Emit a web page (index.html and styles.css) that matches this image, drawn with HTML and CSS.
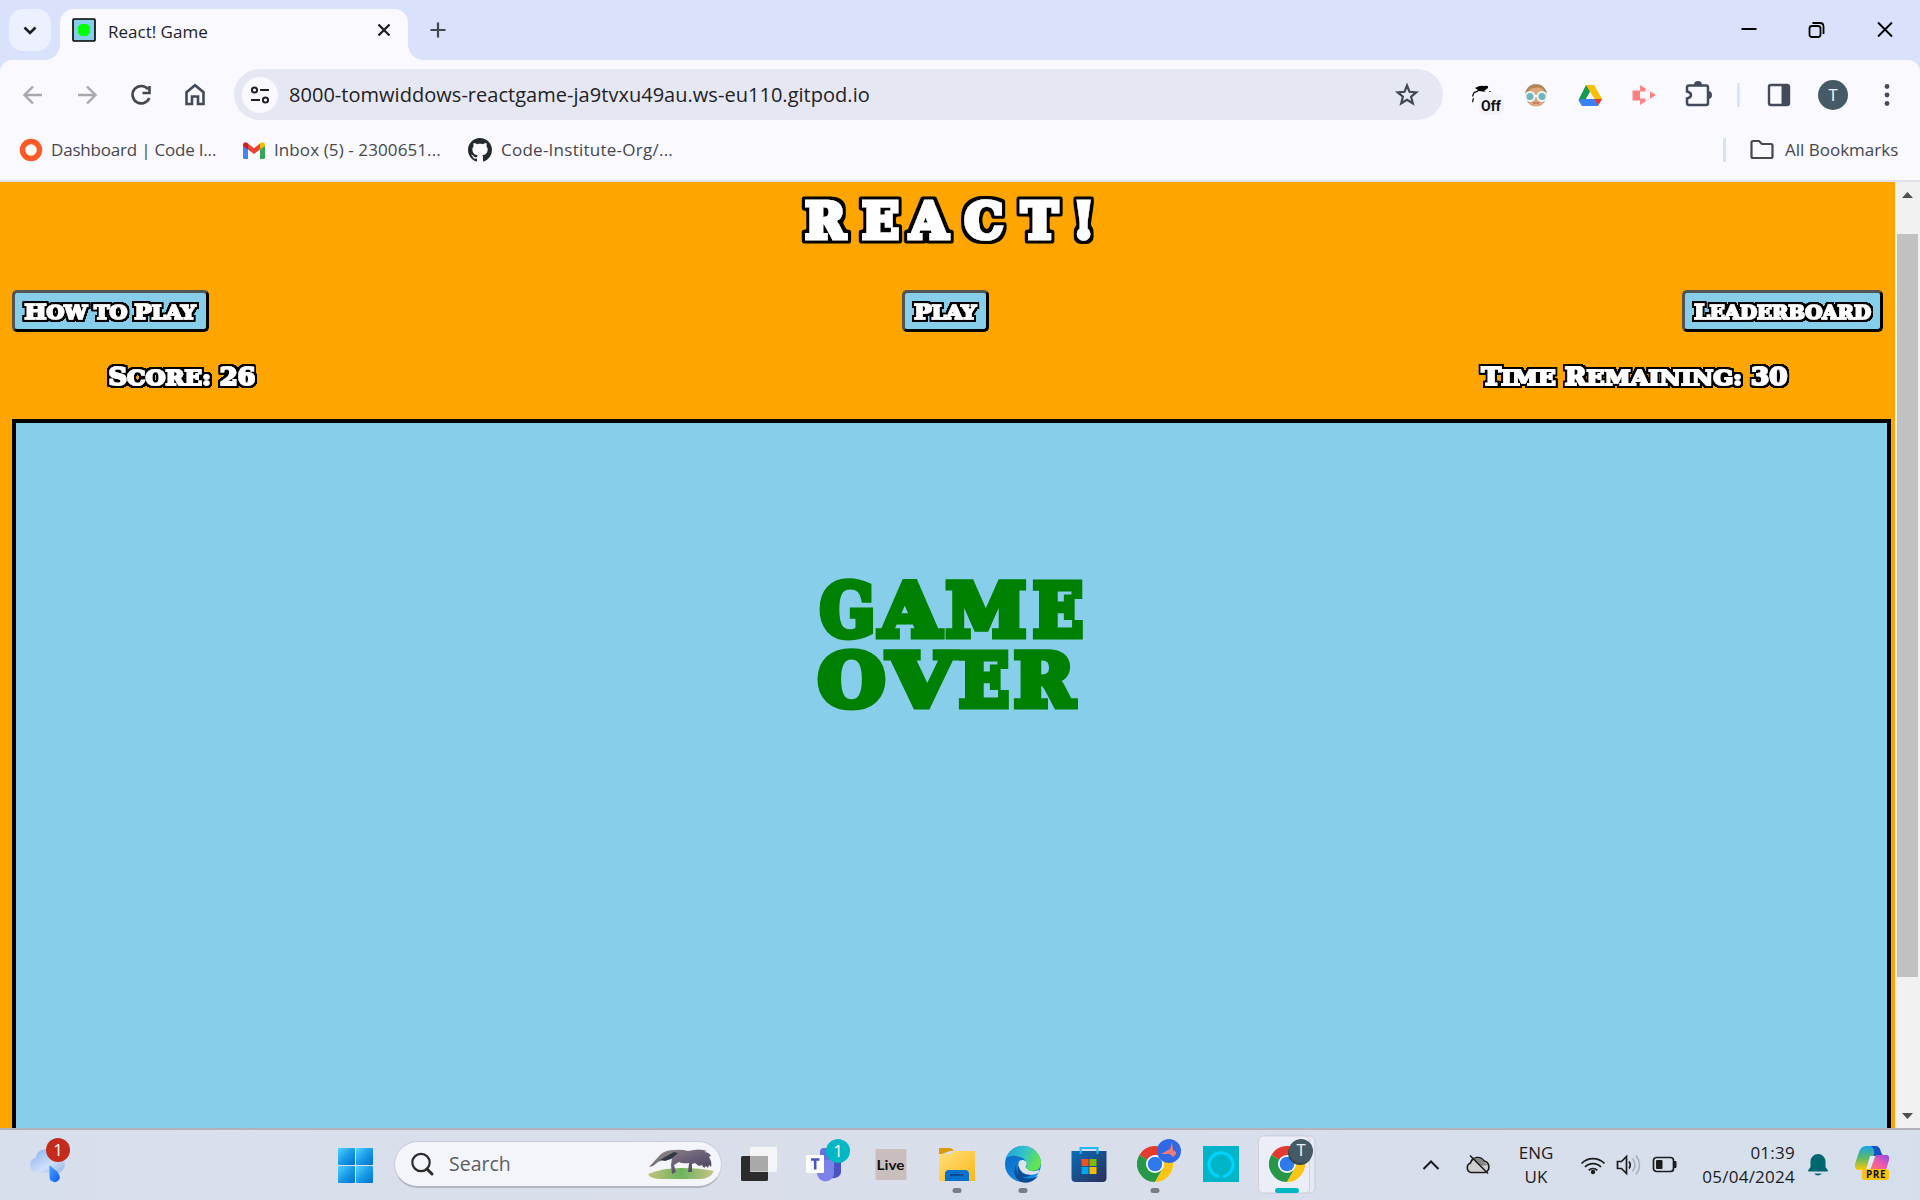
FILE: index.html
```html
<!DOCTYPE html>
<html lang="en">
<head>
<meta charset="utf-8">
<title>React! Game</title>
<link rel="stylesheet" href="styles.css">
</head>
<body>
<svg class="defs" width="0" height="0" aria-hidden="true">
  <defs>
    <filter id="outline-lg" x="-5%" y="-20%" width="110%" height="140%">
      <feMorphology in="SourceAlpha" operator="dilate" radius="3" result="fat"/>
      <feGaussianBlur in="fat" stdDeviation="0.9" result="soft"/>
      <feComponentTransfer in="soft" result="edge"><feFuncA type="linear" slope="3" intercept="-0.8"/></feComponentTransfer>
      <feMerge><feMergeNode in="edge"/><feMergeNode in="SourceGraphic"/></feMerge>
    </filter>
    <filter id="outline-sm" x="-5%" y="-20%" width="110%" height="140%">
      <feMorphology in="SourceAlpha" operator="dilate" radius="2" result="fat"/>
      <feGaussianBlur in="fat" stdDeviation="0.6" result="soft"/>
      <feComponentTransfer in="soft" result="edge"><feFuncA type="linear" slope="3" intercept="-0.5"/></feComponentTransfer>
      <feMerge><feMergeNode in="edge"/><feMergeNode in="SourceGraphic"/></feMerge>
    </filter>
    <linearGradient id="win" x1="0" y1="0" x2="1" y2="1"><stop offset="0" stop-color="#4fd4ff"/><stop offset=".5" stop-color="#1a9be6"/><stop offset="1" stop-color="#0070cc"/></linearGradient>
    <linearGradient id="fold" x1="0" y1="0" x2="1" y2="1"><stop offset="0" stop-color="#ffe07a"/><stop offset="1" stop-color="#fbb81c"/></linearGradient>
    <linearGradient id="cloud" x1="0" y1="0" x2="1" y2="1"><stop offset="0" stop-color="#86aef0"/><stop offset=".6" stop-color="#cfe0f8"/><stop offset="1" stop-color="#8fb2ea"/></linearGradient>
    <linearGradient id="drop" x1="0" y1="0" x2="1" y2="1"><stop offset="0" stop-color="#4aa3ff"/><stop offset="1" stop-color="#0a5cf5"/></linearGradient>
    <linearGradient id="edge-top" x1="0" y1="0" x2="1" y2=".4"><stop offset="0" stop-color="#1e9fe0"/><stop offset=".55" stop-color="#35c4c8"/><stop offset="1" stop-color="#62e44d"/></linearGradient>
    <linearGradient id="edge-body" x1="0" y1="0" x2=".6" y2="1"><stop offset="0" stop-color="#0a63bd"/><stop offset="1" stop-color="#138fe6"/></linearGradient>
    <linearGradient id="store" x1="0" y1="0" x2="1" y2="1"><stop offset="0" stop-color="#0a6cb8"/><stop offset="1" stop-color="#2b2f59"/></linearGradient>
    <linearGradient id="cop-a" x1="0" y1="0" x2="0" y2="1"><stop offset="0" stop-color="#18a5e8"/><stop offset=".5" stop-color="#5cb96a"/><stop offset="1" stop-color="#ffc800"/></linearGradient>
    <linearGradient id="cop-b" x1="0" y1="1" x2="1" y2="0"><stop offset="0" stop-color="#ff7a5a"/><stop offset=".5" stop-color="#ef5aa8"/><stop offset="1" stop-color="#8a48e8"/></linearGradient>
    <linearGradient id="fur" x1="0" y1="0" x2="1" y2="1"><stop offset="0" stop-color="#9a9085"/><stop offset=".5" stop-color="#6b6178"/><stop offset="1" stop-color="#453d58"/></linearGradient>
    <linearGradient id="grass" x1="0" x2="1"><stop offset="0" stop-color="#c3c37c"/><stop offset=".5" stop-color="#6db45c"/><stop offset="1" stop-color="#c9c387"/></linearGradient>
    <symbol id="chrome" viewBox="0 0 36 36">
      <path fill="#e33b2e" d="M18 18L2.400 9A18 18 0 0 1 33.600 9L18 9z"/>
      <path fill="#279847" d="M2.400 9A18 18 0 0 0 18 36L25.800 22.500 18 18z"/>
      <path fill="#fdc513" d="M33.600 9A18 18 0 0 1 18 36L25.800 22.500 25.800 13.500 18 9z"/>
      <circle cx="18" cy="18" r="9" fill="#fff"/><circle cx="18" cy="18" r="7.300" fill="#2f78ee"/>
    </symbol>
  </defs>
</svg>

<header class="tabstrip">
  <button class="tab-search" aria-label="Search tabs"><svg width="42" height="42"><path d="M15.500 18.500l5.500 5.500 5.500-5.500" fill="none" stroke="#1c1e22" stroke-width="2.600"/></svg></button>
  <div class="tab">
    <svg class="favicon" width="24" height="24"><rect x="1" y="1" width="22" height="22" rx="1" fill="#87ceeb" stroke="#000" stroke-width="1.600"/><path d="M9 6h6l3 3v6l-3 3H9l-3-3V9z" fill="#0f0"/></svg>
    <span class="tab-title">React! Game</span>
    <svg width="14" height="14"><path d="M1.500 1.500l11 11M12.500 1.500l-11 11" stroke="#1c1e22" stroke-width="2.300"/></svg>
  </div>
  <svg class="new-tab" width="18" height="18"><path d="M9 1.500v15M1.500 9h15" stroke="#43474e" stroke-width="2.200"/></svg>
  <div class="window-buttons">
    <svg width="68" height="60"><path d="M26.500 29h15" stroke="#000" stroke-width="2"/></svg>
    <svg width="68" height="60"><rect x="26.500" y="26" width="11" height="11" rx="2.500" fill="none" stroke="#000" stroke-width="1.800"/><path d="M29.500 23h7.500q3.500 0 3.500 3.500V34" fill="none" stroke="#000" stroke-width="1.800"/></svg>
    <svg width="68" height="60"><path d="M27 22.500l14 14M41 22.500l-14 14" stroke="#000" stroke-width="1.900"/></svg>
  </div>
</header>

<div class="toolbar">
  <nav class="icon-row">
    <svg width="54" height="54"><path d="M36 27H19.500M27 18.500L18.500 27l8.500 8.500" fill="none" stroke="#a7a7ac" stroke-width="2.400"/></svg>
    <svg width="54" height="54"><path d="M18 27h16.500M27 18.500l8.500 8.500-8.500 8.500" fill="none" stroke="#a7a7ac" stroke-width="2.400"/></svg>
    <svg width="54" height="54"><path d="M34 21.200A8.700 8.700 0 1 0 35.300 30M35.500 18v7H28.500" fill="none" stroke="#43474e" stroke-width="2.600"/></svg>
    <svg width="54" height="54"><path d="M18.500 24.200L27 17.200l8.500 7V36h-5.500v-7.500h-6V36h-5.500z" fill="none" stroke="#434a5c" stroke-width="2.600"/></svg>
  </nav>
  <div class="omnibox">
    <span class="site-info"><svg width="36" height="36"><g fill="none" stroke="#1f2125" stroke-width="2"><circle cx="12.500" cy="13" r="2.600"/><path d="M18 13h9M9 23h9"/><circle cx="23.500" cy="23" r="2.600"/></g></svg></span>
    <span class="url">8000-tomwiddows-reactgame-ja9tvxu49au.ws-eu110.gitpod.io</span>
    <svg width="26" height="26"><path d="M13 3.500l2.500 6.300 6.800.5-5.200 4.400 1.700 6.600-5.800-3.600-5.800 3.600 1.700-6.600-5.200-4.400 6.800-.5z" fill="none" stroke="#43474e" stroke-width="2.200"/></svg>
  </div>
  <div class="icon-row extensions">
    <svg width="54" height="54"><path d="M20 20q5-3 9-2 5-1 4 2l-4 3 2 1-7-1-6 3q2-3 5-4zM17 28q1-4 3-5l-2 6zM17 33l1-3 1 0-1 5zM34 23l3 1h-3z" fill="#050505"/><rect x="24" y="27" width="25" height="20" rx="6" fill="#f1f2fa"/><text x="26" y="42.500" class="off">Off</text></svg>
    <svg width="54" height="54"><circle cx="27" cy="27" r="11" fill="#b1865b"/><path d="M18 27l3-6q8-3 13 0l2 6-2 9q-7 5-14 0z" fill="#dca77d"/><path d="M15 28h24" stroke="#fff" stroke-width="2"/><g fill="#78b2bd" stroke="#e5f6f7" stroke-width="2"><circle cx="21" cy="28.500" r="4.500"/><circle cx="33" cy="28.500" r="4.500"/></g><path d="M24 35h6" stroke="#b7574e"/></svg>
    <svg width="54" height="54"><path d="M23 17h8l-12 21-3.500-6z" fill="#149a50"/><path d="M23 17h8l8 14h-7.500z" fill="#ffbd00"/><path d="M19.500 31H39l-4 7H19.500l-4-6z" fill="#3c80f6"/><path d="M31.500 31H39l-4 6z" fill="#ed3529"/><path d="M27 24l4 7h-8z" fill="#faf9ff"/></svg>
    <svg width="54" height="54"><path d="M23 17l16 10-16 10zM15.500 22.500H23v10h-7.500z" fill="#ff8280"/><path d="M23 23.500h5.500V20.500l4.500 3v7l-4.500 3v-3H23z" fill="#faf9ff"/></svg>
    <svg width="54" height="54"><path d="M18 17.500h17q2 0 2 2V35q0 2-2 2H18q-2 0-2-2v-4.500q4-1 4-3.500t-4-3.500V19.500q0-2 2-2z" fill="none" stroke="#434a5c" stroke-width="2.500"/><path d="M23 17a4 4 0 0 1 8 0zM37 23a4 4 0 0 1 0 8z" fill="#434a5c"/></svg>
    <svg width="27" height="54"><path d="M13.500 15v24" stroke="#d5e2fb" stroke-width="2.500"/></svg>
    <svg width="54" height="54"><rect x="17" y="17" width="20" height="20" rx="2" fill="none" stroke="#434a5c" stroke-width="2.400"/><path d="M29.500 17H37v20h-7.500z" fill="#434a5c"/></svg>
    <svg width="54" height="54"><circle cx="27" cy="27" r="15" fill="#455a64"/><text x="27" y="32.500" class="avatar">T</text></svg>
    <svg width="54" height="54"><g fill="#434a5c"><circle cx="27" cy="18.500" r="2.400"/><circle cx="27" cy="27" r="2.400"/><circle cx="27" cy="35.500" r="2.400"/></g></svg>
  </div>
</div>

<div class="bookmarks">
  <svg width="24" height="24"><circle cx="12" cy="12" r="8.500" fill="#fff" stroke="#fb5b26" stroke-width="5.500"/></svg>
  <span class="bm bm-1">Dashboard | Code I...</span>
  <svg width="22" height="17" viewBox="0 0 22 17"><path d="M0 3v12.500Q0 17 1.500 17H5V5z" fill="#4285f4"/><path d="M22 3v12.500q0 1.500-1.500 1.500H17V5z" fill="#34a853"/><path d="M5 1.500l6 4.700 6-4.700v6L11 12 5 7.500z" fill="#ea4335"/><path d="M0 2.500Q1-1 4 .7l1 .8v6L0 4z" fill="#c5221f"/><path d="M22 2.500Q21-1 18 .7l-1 .8v6L22 4z" fill="#fbbc04"/></svg>
  <span class="bm bm-2">Inbox (5) - 2300651...</span>
  <svg width="24" height="24" viewBox="0 0 16 16"><path fill="#24292f" d="M8 0C3.580 0 0 3.580 0 8c0 3.540 2.290 6.530 5.470 7.590.4.070.55-.17.55-.38 0-.19-.01-.82-.01-1.490-2.010.37-2.530-.49-2.690-.94-.09-.23-.48-.94-.82-1.130-.28-.15-.68-.52-.01-.53.63-.01 1.080.58 1.230.82.72 1.210 1.870.87 2.330.66.070-.52.28-.87.51-1.070-1.780-.2-3.640-.89-3.640-3.950 0-.87.31-1.590.82-2.150-.08-.2-.36-1.020.08-2.120 0 0 .67-.21 2.200.82.64-.18 1.320-.27 2-.27s1.360.09 2 .27c1.530-1.040 2.200-.82 2.200-.82.44 1.100.16 1.920.08 2.120.51.56.82 1.270.82 2.150 0 3.070-1.870 3.750-3.650 3.950.29.25.54.73.54 1.480 0 1.070-.01 1.930-.01 2.200 0 .21.15.46.55.38A8.010 8.010 0 0 0 16 8c0-4.420-3.580-8-8-8z"/></svg>
  <span class="bm bm-3">Code-Institute-Org/...</span>
  <i class="divider"></i>
  <svg width="26" height="22"><path d="M2.500 3.500q0-1.500 1.500-1.500h6l3 3h9q1.500 0 1.500 1.500V17.500q0 1.500-1.500 1.500H4q-1.500 0-1.500-1.500z" fill="none" stroke="#46484d" stroke-width="2.200"/></svg>
  <span class="bm bm-all">All Bookmarks</span>
</div>

<div class="viewport">
  <main class="game">
    <h1><svg width="340" height="64"><text class="title" y="49.500" x="13 70 118 172.500 229.500 281">REACT!</text></svg></h1>
    <div class="controls">
      <button class="game-btn how"><svg width="191" height="36"><text class="label" x="9.500" y="25.500" textLength="171" lengthAdjust="spacingAndGlyphs">H<tspan class="sc">OW TO </tspan>P<tspan class="sc">LAY</tspan></text></svg></button>
      <button class="game-btn play"><svg width="81" height="36"><text class="label" x="9" y="25.500" textLength="62" lengthAdjust="spacingAndGlyphs">P<tspan class="sc">LAY</tspan></text></svg></button>
      <button class="game-btn board"><svg width="195" height="36"><text class="label" x="9" y="25.500" textLength="177" lengthAdjust="spacingAndGlyphs">L<tspan class="sc">EADERBOARD</tspan></text></svg></button>
    </div>
    <div class="stats">
      <svg width="160" height="36"><text class="stat" x="4.500" y="25.500" textLength="147" lengthAdjust="spacingAndGlyphs">S<tspan class="sc">CORE:</tspan> 26</text></svg>
      <svg width="320" height="36"><text class="stat" x="4.500" y="25.500" textLength="306" lengthAdjust="spacingAndGlyphs">T<tspan class="sc">IME</tspan> R<tspan class="sc">EMAINING:</tspan> 30</text></svg>
    </div>
    <section class="arena">
      <svg width="320" height="190">
        <text class="over" y="73.500"><tspan x="11" textLength="55" lengthAdjust="spacingAndGlyphs">G</tspan><tspan x="71" textLength="60" lengthAdjust="spacingAndGlyphs">A</tspan><tspan x="137" textLength="80" lengthAdjust="spacingAndGlyphs">M</tspan><tspan x="224" textLength="50" lengthAdjust="spacingAndGlyphs">E</tspan></text>
        <text class="over" y="144"><tspan x="9" textLength="67" lengthAdjust="spacingAndGlyphs">O</tspan><tspan x="79" textLength="66" lengthAdjust="spacingAndGlyphs">V</tspan><tspan x="150" textLength="50" lengthAdjust="spacingAndGlyphs">E</tspan><tspan x="205" textLength="60" lengthAdjust="spacingAndGlyphs">R</tspan></text>
      </svg>
    </section>
  </main>
  <aside class="scrollbar">
    <svg width="25" height="52"><path d="M7 16l5.500-6 5.500 6z" fill="#505050"/></svg>
    <i class="thumb"></i>
    <svg width="25" height="22"><path d="M7 7l5.500 6L18 7z" fill="#505050"/></svg>
  </aside>
</div>

<footer class="taskbar">
  <svg class="weather" width="56" height="70"><path d="M9 32.500a8 8 0 0 1-1-15.500 10.500 10.500 0 0 1 20-2 9 9 0 0 1 5 17.500z" transform="translate(0 11) scale(.93 .98)" fill="url(#cloud)"/><path d="M21.500 35l8 7q3 4 2 7-3 5-8 2-2-1-2-4z" fill="url(#drop)"/></svg>
  <svg class="start" width="35" height="35"><g fill="url(#win)"><rect width="17" height="17" rx="1"/><rect x="18" width="17" height="17" rx="1"/><rect y="18" width="17" height="17" rx="1"/><rect x="18" y="18" width="17" height="17" rx="1"/></g></svg>
  <div class="search">
    <svg width="24" height="24"><circle cx="11" cy="10.500" r="8.700" fill="none" stroke="#2b2b2b" stroke-width="2.200"/><path d="M17 17l5 5" stroke="#2b2b2b" stroke-width="3" stroke-linecap="round"/></svg>
    <span>Search</span>
    <svg width="68" height="32"><path d="M1 26Q15 20 34 20t33 3q-4 8-14 8H16Q2 31 1 26z" fill="url(#grass)"/><path d="M2 19L13 7q5-5 14-5 8-1 14 1 12-3 19 0l-3 1q5 0 7 4-3 0-1 3 2 3 1 8l-2-2-1 3-2-2-2 2-2-3-3 1-4-3-3 1v8h-4l1-9q-7 1-10-1l-5 3 2 7-4 2-1-9 1-7-7 1-7 3-5 4z" fill="url(#fur)"/><path d="M13 12l14-8 4 1-7 6-6 2z" fill="#2e3a44"/></svg>
  </div>
  <div class="apps">
    <svg width="66" height="70"><rect x="15" y="26" width="27" height="25" rx="1.500" fill="#2c2c2c"/><rect x="24" y="17" width="27" height="25" rx="1" fill="#f6f6f6" opacity=".95"/><path d="M24 26h18v15.500H24z" fill="#a9a9a9"/></svg>
    <svg width="66" height="70"><rect x="28" y="18" width="14" height="14" rx="4" fill="#6871e0"/><path d="M37 30h12v13q-2 6-10 5z" fill="#4a55c4"/><path d="M25 30h17v13a8.500 8.500 0 0 1-17 0z" fill="#7b83eb"/><rect x="14" y="25" width="18" height="18" rx="1" fill="#fff"/><path d="M19 29.500h8.500M23.200 29.500v10" stroke="#4b53bc" stroke-width="2.600"/><circle cx="46" cy="21" r="12" fill="#00b7c3"/><text x="46" y="27" class="badge-text">1</text></svg>
    <svg width="66" height="70"><rect x="17.500" y="19" width="31" height="31" rx="1" fill="#c9bebe"/><text x="18.500" y="40" class="live" textLength="28" lengthAdjust="spacingAndGlyphs">Live</text></svg>
    <svg width="66" height="70"><path d="M15 18h11q2 0 4 3h-4l-11 4z" fill="#db9a09"/><path d="M15 24h11q2 0 4-3h21v29q0 1-1 1H16q-1 0-1-1z" fill="url(#fold)"/><path d="M21 51v-7q0-4 4-4h16q4 0 4 4v7z" fill="#0870cd"/><path d="M26 45h13" stroke="#054a91" stroke-width="2"/><rect x="28.500" y="58" width="9" height="5" rx="2.500" fill="#7b7c84"/></svg>
    <svg width="66" height="70"><circle cx="33" cy="34" r="18" fill="url(#edge-body)"/><path d="M16 28A18 18 0 0 1 51 33q-1 8-9 8-6 0-6-3 2-9-6-11-8-3-14 1z" fill="url(#edge-top)"/><path d="M27 33q-3 8 3 13 8 5 18 0-7 9-17 6-11-6-4-19z" fill="#0b4c98"/><path d="M28.500 36q-1-7 5-6 5 2 2 7 2 5 10 4l4-1-1 3q-16 6-20-7z" fill="#dfe2ef"/><path d="M28.500 36q1 9 13 9-8 4-12 1-3-4-1-10z" fill="#0b4c98"/><rect x="28.500" y="58" width="9" height="5" rx="2.500" fill="#7b7c84"/></svg>
    <svg width="66" height="70"><path d="M15.500 21h35v27q0 4-4 4h-27q-4 0-4-4z" fill="url(#store)"/><path d="M24.500 24v-6h17v6" fill="none" stroke="#21b9f4" stroke-width="2"/><path d="M25.500 29h7v7h-7z" fill="#f25022"/><path d="M33.500 29h7v7h-7z" fill="#7fba00"/><path d="M25.500 37h7v7h-7z" fill="#00a4ef"/><path d="M33.500 37h7v7h-7z" fill="#ffb900"/></svg>
    <svg width="66" height="70"><use href="#chrome" x="15" y="16" width="36" height="36"/><circle cx="47" cy="21" r="12" fill="#3069e4"/><path d="M50 12l-2 7-9 5 9 0 3 3 3-3 0-2-3-2z" fill="#f17b78"/><rect x="28.500" y="58" width="9" height="5" rx="2.500" fill="#7b7c84"/></svg>
    <svg width="66" height="70"><rect x="15" y="16" width="36" height="36" fill="#00b5c8"/><path d="M31 46.500a12 12 0 1 1 4 0" fill="none" stroke="#00d5ff" stroke-width="3"/></svg>
    <svg width="66" height="70"><rect x="8" y="6" width="53" height="57" rx="5" fill="#e6e8f2" stroke="#c9ccda"/><rect x="4.500" y="6" width="51" height="57" rx="5" fill="#eceef7" stroke="#cdd0dd"/><use href="#chrome" x="15" y="16" width="36" height="36"/><circle cx="46" cy="23" r="12" fill="#33484f"/><circle cx="47" cy="21" r="12" fill="#455a64"/><text x="47" y="26" class="avatar">T</text><rect x="21" y="58" width="24" height="5" rx="2.500" fill="#00b7c3"/></svg>
  </div>
  <div class="tray">
    <svg width="18" height="12"><path d="M1.500 10L9 2.500l7.500 7.500" fill="none" stroke="#1c1c1c" stroke-width="2"/></svg>
    <svg class="onedrive" width="26" height="22"><path d="M6 18.500A5 5 0 0 1 5.500 9 7.500 7.500 0 0 1 19 7a6 6 0 0 1 1 11.500z" fill="#cfcfcf" stroke="#1c1c1c" stroke-width="1.600"/><path d="M8 5q6-3 11 3l4 3-8 1z" fill="#888"/><path d="M5 1.500l18 18" stroke="#1c1c1c" stroke-width="1.600"/></svg>
    <span class="lang">ENG<br>UK</span>
    <svg class="wifi" width="26" height="20"><g fill="none" stroke="#1c1c1c" stroke-width="1.700"><path d="M1.500 8.500a16 16 0 0 1 23 0M5 12a11 11 0 0 1 16 0M8.700 15.300a6 6 0 0 1 8.600 0"/></g><circle cx="13" cy="17" r="2.200" fill="#1c1c1c"/></svg>
    <svg class="sound" width="26" height="22"><path d="M1.500 7.500h4l5-5v17l-5-5h-4z" fill="none" stroke="#1c1c1c" stroke-width="1.700"/><path d="M13 7.500q2.500 3.500 0 7" fill="none" stroke="#1c1c1c" stroke-width="1.700"/><path d="M16.500 4.500q5 6.500 0 13M20 1.500q7 9.500 0 19" fill="none" stroke="#a9aebb" stroke-width="1.600"/></svg>
    <svg class="battery" width="26" height="18"><rect x="1.500" y="1.500" width="20" height="14" rx="3" fill="none" stroke="#1c1c1c" stroke-width="1.700"/><rect x="4" y="4" width="6.500" height="9" rx="1" fill="#1c1c1c"/><path d="M22 5.500h2v6h-2z" fill="#1c1c1c" stroke="#1c1c1c"/></svg>
    <span class="clock">01:39<br>05/04/2024</span>
    <svg class="bell" width="22" height="24"><path d="M11 1a7.500 7.500 0 0 1 7.500 7.500V14l2.500 3.500q0 1-1 1H2q-1 0-1-1L3.500 14V8.500A7.500 7.500 0 0 1 11 1zM7 20.500h8q-4 4-8 0z" fill="#00666f"/></svg>
    <svg class="copilot" width="38" height="38"><path d="M5 6q2-6 7-6h12l-3 10-5 13q-1 1-4 1H4q-4-1-3-6z" fill="url(#cop-a)"/><path d="M17 0h4q5 0 6 6l2 4H20q1-8-3-10z" fill="#1450c8"/><path d="M22 9h10q4 0 3 5l-3 10H13q4 0 5-5z" fill="url(#cop-b)"/><path d="M16 10h5l-5 14h-4z" fill="#dfe8f4"/><rect x="8" y="23" width="27" height="11" rx="2.500" fill="#fbc314"/><text x="12" y="32" class="pre">PRE</text></svg>
  </div>
  <span class="weather-badge">1</span>
</footer>
</body>
</html>
```
FILE: styles.css
```css
* { box-sizing: border-box; }
body {
  margin: 0;
  width: 1920px;
  height: 1200px;
  overflow: hidden;
  display: flex;
  flex-direction: column;
  background: #dae1fa;
  color: #1f2125;
  font-family: "Open Sans", "Noto Sans", sans-serif;
}
svg { display: block; flex: none; overflow: visible; }
.defs { position: absolute; }
button { font: inherit; padding: 0; margin: 0; }

/* Browser tab strip */
.tabstrip { flex: none; height: 60px; display: flex; align-items: flex-start; background: #dae1fa; }
.tab-search { width: 42px; height: 42px; margin: 9px 9px 0; border: 0; border-radius: 14px; background: #edf0ff; }
.tab {
  position: relative;
  width: 348px;
  height: 51px;
  margin-top: 9px;
  padding: 0 17px 0 12px;
  display: flex;
  align-items: center;
  border-radius: 14px 14px 0 0;
  background: #faf9ff;
}
.tab::before, .tab::after {
  content: "";
  position: absolute;
  bottom: 0;
  width: 15px;
  height: 15px;
}
.tab::before { left: -15px; background: radial-gradient(circle at 0 0, transparent 14.5px, #faf9ff 15px); }
.tab::after { right: -15px; background: radial-gradient(circle at 100% 0, transparent 14.5px, #faf9ff 15px); }
.tab > svg { margin-bottom: 9px; }
.tab-title { flex: 1; margin: 0 0 6px 12px; font-size: 17px; letter-spacing: 0; }
.new-tab { margin: 21px 0 0 21px; }
.window-buttons { display: flex; margin: 0 1px 0 auto; }

/* Toolbar */
.toolbar {
  flex: none;
  height: 69px;
  padding: 0 6px;
  display: flex;
  align-items: center;
  background: #faf9ff;
  border-radius: 12px 12px 0 0;
}
.icon-row { display: flex; }
.omnibox {
  width: 1209px;
  height: 51px;
  margin: 0 12px;
  padding: 0 23px 0 8px;
  display: flex;
  align-items: center;
  border-radius: 26px;
  background: #e5e8f3;
}
.site-info { width: 36px; height: 36px; border-radius: 50%; background: #faf9ff; }
.url { flex: 1; margin: 0 0 1px 11px; font-size: 20px; letter-spacing: 0.03px; white-space: nowrap; }
.off { font: bold 14px Roboto, sans-serif; fill: #111; }
.avatar { font: 16px Roboto, sans-serif; fill: #eef2f4; text-anchor: middle; }

.bookmarks {
  flex: none;
  height: 53px;
  padding: 0 22px 9px 19px;
  display: flex;
  align-items: center;
  background: #faf9ff;
  border-bottom: 2px solid #dfe1ec;
  font-size: 17px;
  color: #45474c;
}
.bm { white-space: nowrap; margin-bottom: 2px; }
.bm-1 { width: 200px; padding-left: 8px; letter-spacing: -0.2px; }
.bm-2 { width: 203px; padding-left: 9px; letter-spacing: 0.1px; }
.bm-3 { padding-left: 9px; letter-spacing: 0.25px; }
.bm-all { width: 113px; margin-left: 10px; }
.divider { width: 3px; height: 24px; margin: 0 23px 0 auto; background: #d5e2fb; }

/* Game page */
.viewport { flex: none; height: 946px; display: flex; overflow: hidden; background: #ffa500; }
.game { width: 1895px; display: flex; flex-direction: column; }
h1 { margin: 6px 0 0 792px; height: 102px; }
.title, .label, .stat, .over { font-family: "DejaVu Serif", serif; font-weight: bold; stroke-linejoin: miter; }
.title { font-size: 48.5px; fill: #fff; stroke: #fff; stroke-width: 4.5px; filter: url(#outline-lg); }
.controls { display: grid; grid-template-columns: 1fr auto 1fr; padding: 0 12px; height: 42px; }
.game-btn {
  height: 42px;
  border: 3px solid;
  border-color: #545454 #000 #000 #545454;
  border-radius: 5px;
  background: #87ceeb;
}
.how { justify-self: start; }
.play { margin: 0 4px 0 0; }
.board { justify-self: end; }
.label { font-size: 20.5px; fill: #fff; stroke: #fff; stroke-width: 1.7px; filter: url(#outline-sm); }
.label .sc { font-size: 18px; }
.stat { font-size: 23.5px; fill: #fff; stroke: #fff; stroke-width: 1.8px; filter: url(#outline-sm); }
.stat .sc { font-size: 21px; }
.stats { display: flex; justify-content: space-between; padding: 27px 98px 0 104px; height: 87px; }
.arena {
  width: 1879px;
  flex: 1;
  margin-left: 12px;
  padding: 139px 0 0 793px;
  border: 4px solid #000;
  border-bottom: 0;
  background: #87ceeb;
}
.over { font-size: 72px; fill: #008000; stroke: #008000; stroke-width: 7px; }
.scrollbar { width: 25px; display: flex; flex-direction: column; background: #f1f1f1; }
.thumb { display: block; height: 743px; margin: 0 2px auto; background: #c1c1c1; }

/* Taskbar */
.taskbar {
  position: relative;
  flex: none;
  height: 72px;
  display: flex;
  align-items: center;
  border-top: 2px solid #b0b1bb;
  background: linear-gradient(90deg, #d8dfec, #dadeeb 35%, #d9deeb 60%, #d5dfec);
  color: #1c1c1c;
}
.weather { margin-left: 28px; }
.weather-badge {
  position: absolute;
  left: 46px;
  top: 8px;
  width: 24px;
  height: 24px;
  border-radius: 50%;
  background: #c42b1c;
  color: #fff;
  font-size: 17px;
  line-height: 24px;
  text-align: center;
}
.start { margin: 0 21px 0 254px; }
.search {
  width: 328px;
  height: 47px;
  padding: 0 6px 0 15px;
  margin: 0 4px 2px 0;
  display: flex;
  align-items: center;
  border: 1px solid #c9ccda;
  border-bottom: 2px solid #b3b6c2;
  border-radius: 24px;
  background: #f4f5fa;
}
.search span { flex: 1; margin: 0 0 0 15px; font-size: 19.5px; color: #5c5d62; }
.apps { display: flex; }
.badge-text { font: 17px "Open Sans", sans-serif; fill: #fff; text-anchor: middle; }
.live { font: bold 14px Lato, sans-serif; fill: #111; }
.tray { display: flex; align-items: center; margin-left: 102px; font-size: 17px; line-height: 24px; }
.onedrive { margin-left: 25px; }
.lang { width: 50px; margin-left: 20px; text-align: center; }
.wifi { margin-left: 19px; }
.sound { margin-left: 10px; }
.battery { margin-left: 10px; }
.clock { width: 104px; margin: 0 0 1px 13px; text-align: right; white-space: nowrap; letter-spacing: 0.25px; }
.bell { margin-left: 12px; }
.copilot { margin-left: 25px; }
.pre { font: bold 10px "Open Sans", sans-serif; fill: #111; letter-spacing: .5px; }
```
